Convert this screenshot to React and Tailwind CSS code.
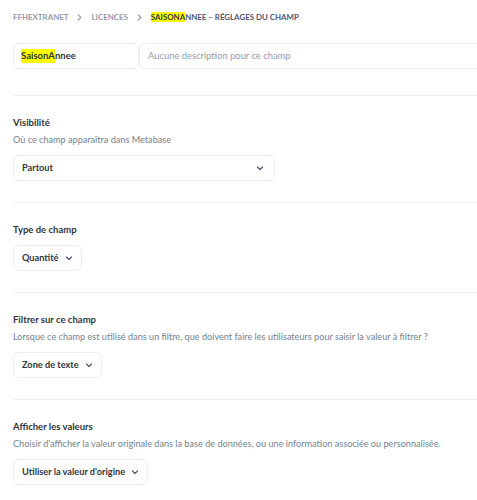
const font = { fontFamily: 'Lato, "Noto Sans", sans-serif' }

function Chevron({ className = '' }) {
  return (
    <svg width="8" height="8" viewBox="0 0 16 16" className={className} fill="none">
      <path d="M3 6l5 5 5-5" stroke="currentColor" strokeWidth="2.4" strokeLinecap="round" strokeLinejoin="round" />
    </svg>
  )
}

function Crumb() {
  return (
    <svg width="5" height="7" viewBox="0 0 10 16" fill="none" className="text-[#949aab]">
      <path d="M2 2l6 6-6 6" stroke="currentColor" strokeWidth="2.6" strokeLinecap="round" strokeLinejoin="round" />
    </svg>
  )
}

function Select({ label, wide }) {
  return (
    <div
      className={
        'flex items-center h-[26px] border border-[#eceef2] rounded-md pl-[8px] text-[9.2px] font-bold text-[#2e353b] ' +
        (wide ? 'w-[262px] justify-between pr-[10px]' : 'w-fit gap-[6px] pr-[8px]')
      }
    >
      <span>{label}</span>
      <Chevron className="text-[#4c5773]" />
    </div>
  )
}

function Section({ title, desc, children }) {
  return (
    <div className="border-t border-[#f0f0f0] pt-[20px] pb-[21px]">
      <div className="text-[9.5px] font-bold text-[#2e353b] leading-[14px]">{title}</div>
      {desc && <div className="text-[9.15px] text-[#74838f] leading-[14px] mt-[3px]">{desc}</div>}
      <div className="mt-[8px]">{children}</div>
    </div>
  )
}

export default function App() {
  return (
    <div className="bg-white min-h-[500px] pl-[13px]" style={font}>
      <div className="flex items-center gap-[9px] pt-[12px] text-[7.9px] font-bold uppercase h-[23px]">
        <span className="text-[#949aab]">FFHEXTRANET</span>
        <Crumb />
        <span className="text-[#949aab]">LICENCES</span>
        <Crumb />
        <span className="text-[#4c5773]">
          <span className="bg-[#ffff00] text-[#2e353b]">SAISONA</span>NNEE – RÉGLAGES DU CHAMP
        </span>
      </div>

      <div className="flex mt-[20px] h-[26px]">
        <div className="w-[126px] border border-[#eceef2] rounded-md flex items-center px-[7px] text-[9.5px] font-bold text-[#2e353b]">
          <span className="bg-[#ffff00]">SaisonA</span>nnee
        </div>
        <div className="flex-1 border border-[#eceef2] rounded-l-md border-r-0 flex items-center px-[8px] text-[9.4px] text-[#949aab]">
          Aucune description pour ce champ
        </div>
      </div>

      <div className="mt-[26px]">
        <Section title="Visibilité" desc="Où ce champ apparaîtra dans Metabase">
          <Select label="Partout" wide />
        </Section>
        <Section title="Type de champ">
          <Select label="Quantité" />
        </Section>
        <Section
          title="Filtrer sur ce champ"
          desc="Lorsque ce champ est utilisé dans un filtre, que doivent faire les utilisateurs pour saisir la valeur à filtrer ?"
        >
          <Select label="Zone de texte" />
        </Section>
        <Section
          title="Afficher les valeurs"
          desc="Choisir d'afficher la valeur originale dans la base de données, ou une information associée ou personnalisée."
        >
          <Select label="Utiliser la valeur d'origine" />
        </Section>
      </div>
    </div>
  )
}
